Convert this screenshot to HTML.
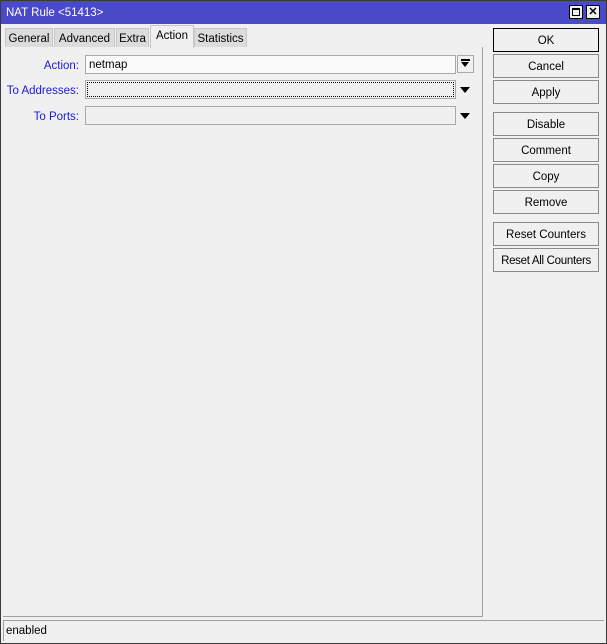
<!DOCTYPE html>
<html><head><style>
*{box-sizing:border-box;margin:0;padding:0}
body{width:607px;height:644px;background:#f0f0f0;font-family:"Liberation Sans",Arial,sans-serif;font-size:11.5px;color:#000;position:relative;overflow:hidden}
.frame{position:absolute;left:0;top:0;width:607px;height:644px;border:1px solid #3a3a3a}
.title{position:absolute;left:1px;top:1px;width:605px;height:23px;background:#4a4ac8;color:#fff;font-size:11.5px;line-height:24px;padding-left:5px}
.tb{position:absolute;top:5px;width:14px;height:14px;background:#f0f0f0;border:1px solid #000}
.tab{position:absolute;top:28px;height:19px;background:#dcdcdc;border:1px solid #c8c8c8;border-bottom:none;line-height:20px;text-align:center}
.tab.act{top:25px;height:23px;background:#f0f0f0;line-height:21px}
.panel{position:absolute;left:3px;top:47px;width:480px;height:570px;border-right:1px solid #a0a0a0;border-bottom:1px solid #a0a0a0}
.lbl{position:absolute;color:#1a1ad0;text-align:right;width:79px;left:0}
.inp{position:absolute;left:85px;width:371px;height:19px;border:1px solid #a8a8a8;background:#f0f0f0;padding-left:3px;line-height:18px}
.btn{position:absolute;left:493px;width:106px;height:24px;border:1px solid #8a8a8a;background:#f0f0f0;text-align:center;line-height:24px}
.tri{position:absolute;left:460px;width:0;height:0;border-left:5px solid transparent;border-right:5px solid transparent;border-top:6px solid #000}
.status{position:absolute;left:3px;top:620px;width:601px;height:21px;border-top:1px solid #a0a0a0;border-left:1px solid #a0a0a0;line-height:21px;padding-left:2px}
</style></head><body>
<div class="frame"></div>
<div class="title">NAT Rule &lt;51413&gt;</div>
<div class="tb" style="left:569px"><div style="position:absolute;left:2px;top:2px;width:8px;height:8px;border:1px solid #000;border-top-width:2px"></div></div>
<div class="tb" style="left:586px;text-align:center;line-height:12px;font-weight:bold;font-size:11px;color:#000">✕</div>
<div class="tab" style="left:5px;width:48px">General</div>
<div class="tab" style="left:54px;width:61px">Advanced</div>
<div class="tab" style="left:116px;width:33px">Extra</div>
<div class="tab act" style="left:150px;width:44px">Action</div>
<div class="tab" style="left:194px;width:53px">Statistics</div>
<div class="panel"></div>
<div class="lbl" style="top:60px">Action:</div>
<div class="inp" style="top:55px;background:#fafafa">netmap</div>
<div style="position:absolute;left:457px;top:55px;width:17px;height:18px;border:1px solid #a8a8a8;background:#f0f0f0"><div style="position:absolute;left:3px;top:3px;width:9px;height:2px;background:#000"></div><div style="position:absolute;left:3px;top:6px;border-left:4.5px solid transparent;border-right:4.5px solid transparent;border-top:5px solid #000"></div></div>
<div class="lbl" style="top:85px">To Addresses:</div>
<div class="inp" style="top:80px;outline:1px dotted #000;outline-offset:-3px"></div>
<div class="tri" style="top:87px"></div>
<div class="lbl" style="top:111px">To Ports:</div>
<div class="inp" style="top:106px"></div>
<div class="tri" style="top:113px"></div>
<div class="btn" style="top:28px;border:1px solid #000">OK</div>
<div class="btn" style="top:54px">Cancel</div>
<div class="btn" style="top:80px">Apply</div>
<div class="btn" style="top:112px">Disable</div>
<div class="btn" style="top:138px">Comment</div>
<div class="btn" style="top:164px">Copy</div>
<div class="btn" style="top:190px">Remove</div>
<div class="btn" style="top:222px">Reset Counters</div>
<div class="btn" style="top:248px;letter-spacing:-0.3px">Reset All Counters</div>
<div class="status">enabled</div>
</body></html>
